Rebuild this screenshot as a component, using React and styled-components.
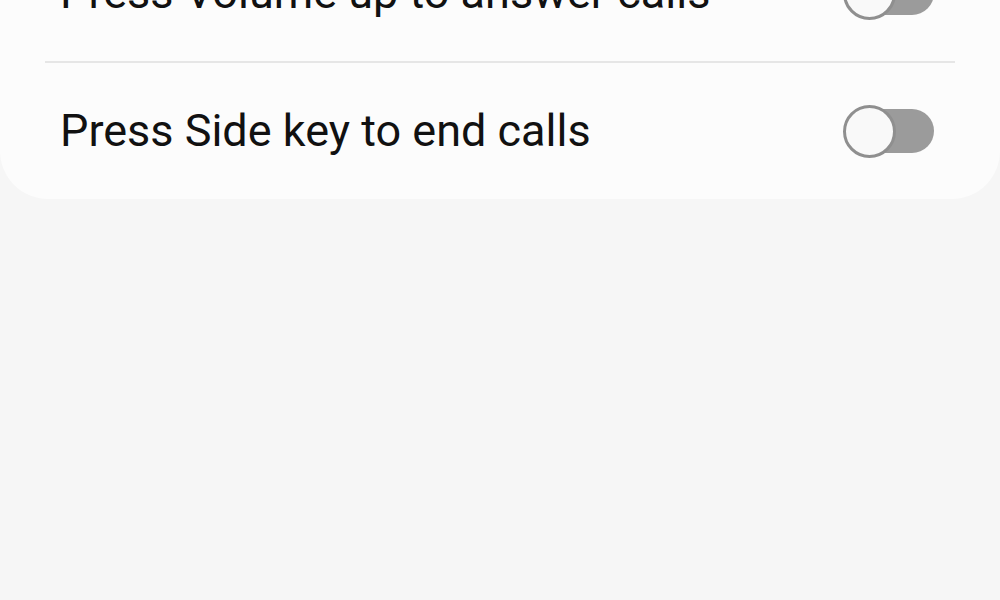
import React from "react";
import styled, { createGlobalStyle } from "styled-components";

const Global = createGlobalStyle`
  html, body { margin: 0; padding: 0; background: #f6f6f6; }
  body { font-family: Roboto, "Noto Sans", sans-serif; overflow: hidden; }
`;

const Page = styled.div`
  width: 1000px;
  height: 600px;
  background: #f6f6f6;
  overflow: hidden;
`;

const Card = styled.div`
  margin-top: -75px;
  background: #fcfcfc;
  border-radius: 0 0 48px 48px;
  display: flex;
  flex-direction: column;
`;

const Row = styled.div`
  height: 136px;
  display: flex;
  align-items: center;
  justify-content: space-between;
  padding: 0 66px 0 60px;
`;

const Label = styled.span`
  font-size: 45px;
  line-height: 1.2;
  color: #111;
  letter-spacing: 0;
`;

const Divider = styled.div`
  height: 2px;
  margin: 0 45px;
  background: #e6e6e6;
`;

const Switch = styled.div`
  display: flex;
  align-items: center;
  width: 91px;
  height: 53px;
`;

const Knob = styled.div`
  position: relative;
  z-index: 1;
  box-sizing: border-box;
  width: 53px;
  height: 53px;
  border-radius: 50%;
  border: 3px solid #8f8f8f;
  background: #f9f9f9;
  flex: none;
`;

const Track = styled.div`
  flex: none;
  width: 64px;
  height: 44px;
  margin-left: -26px;
  border-radius: 0 22px 22px 0;
  background: #9b9b9b;
`;

const Toggle = () => (
  <Switch>
    <Knob />
    <Track />
  </Switch>
);

export default function App() {
  return (
    <Page>
      <Global />
      <Card>
        <Row>
          <Label>Press Volume up to answer calls</Label>
          <Toggle />
        </Row>
        <Divider />
        <Row>
          <Label>Press Side key to end calls</Label>
          <Toggle />
        </Row>
      </Card>
    </Page>
  );
}
